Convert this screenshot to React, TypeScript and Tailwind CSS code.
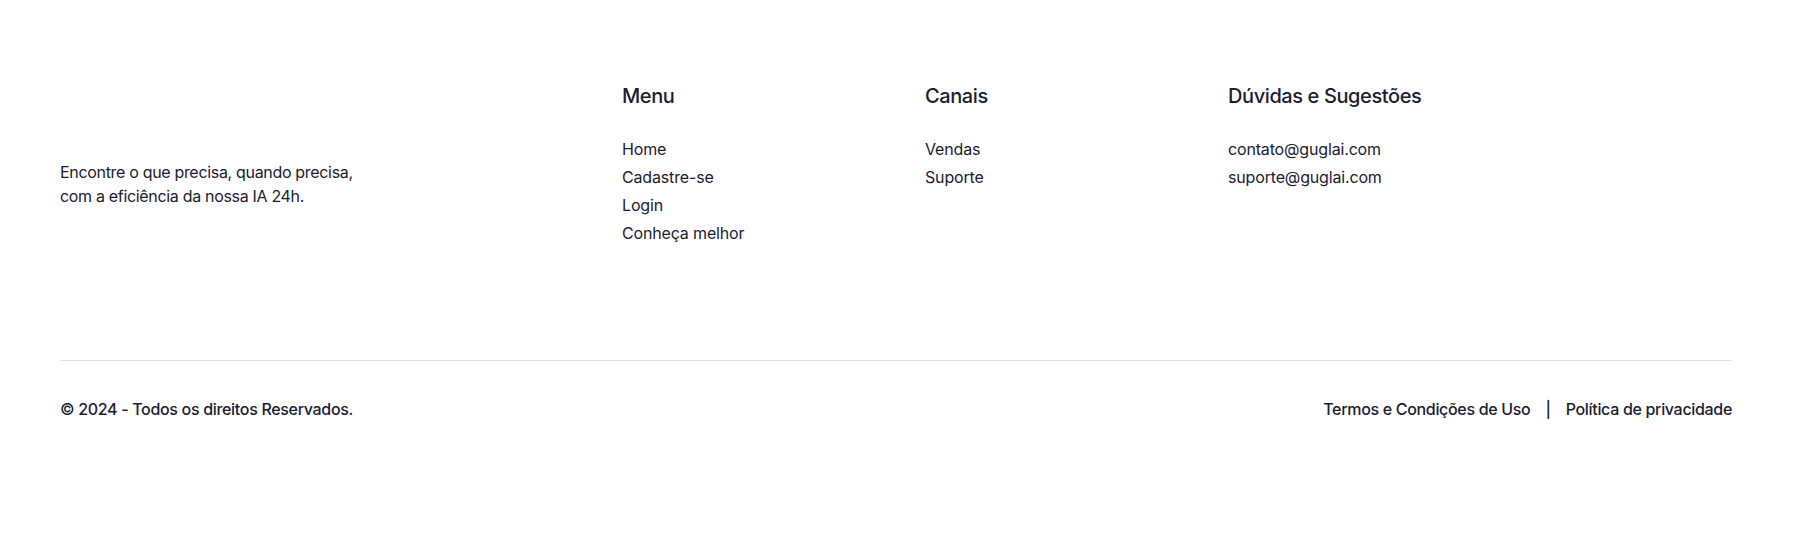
import React from "react";

const font = { fontFamily: "Inter, 'Noto Sans', sans-serif" };

export default function App() {
  return (
    <div className="min-h-[557px] w-full bg-white text-[#1b2030]" style={font}>
      <footer className="pl-[60px] pr-[65px]">
        <div className="flex pt-[82px] h-[360px]">
          <div className="w-[562px] shrink-0 pt-[78px]">
            <p className="w-[300px] text-[16px] leading-[24px] tracking-[-0.02em]">
              Encontre o que precisa, quando precisa, com a eficiência da nossa IA 24h.
            </p>
          </div>
          <div className="w-[303px] shrink-0">
            <h3 className="text-[20px] leading-[28px] font-medium tracking-[-0.02em]">Menu</h3>
            <ul className="mt-[27px] flex flex-col gap-[4px] text-[16px] leading-[24px] tracking-[-0.01em]">
              <li>Home</li>
              <li>Cadastre-se</li>
              <li>Login</li>
              <li>Conheça melhor</li>
            </ul>
          </div>
          <div className="w-[303px] shrink-0">
            <h3 className="text-[20px] leading-[28px] font-medium tracking-[-0.02em]">Canais</h3>
            <ul className="mt-[27px] flex flex-col gap-[4px] text-[16px] leading-[24px] tracking-[-0.01em]">
              <li>Vendas</li>
              <li>Suporte</li>
            </ul>
          </div>
          <div className="flex-1">
            <h3 className="text-[20px] leading-[28px] font-medium tracking-[-0.02em]">Dúvidas e Sugestões</h3>
            <ul className="mt-[27px] flex flex-col gap-[4px] text-[16px] leading-[24px] tracking-[-0.01em]">
              <li>contato@guglai.com</li>
              <li>suporte@guglai.com</li>
            </ul>
          </div>
        </div>
        <div className="h-px bg-[#e0e0e3]" />
        <div className="flex items-center justify-between pt-[36px] text-[16px] leading-[24px] font-medium tracking-[-0.02em]">
          <span>© 2024 - Todos os direitos Reservados.</span>
          <div className="flex items-center">
            <span>Termos e Condições de Uso</span>
            <span className="mx-[15px]">|</span>
            <span>Política de privacidade</span>
          </div>
        </div>
      </footer>
    </div>
  );
}
